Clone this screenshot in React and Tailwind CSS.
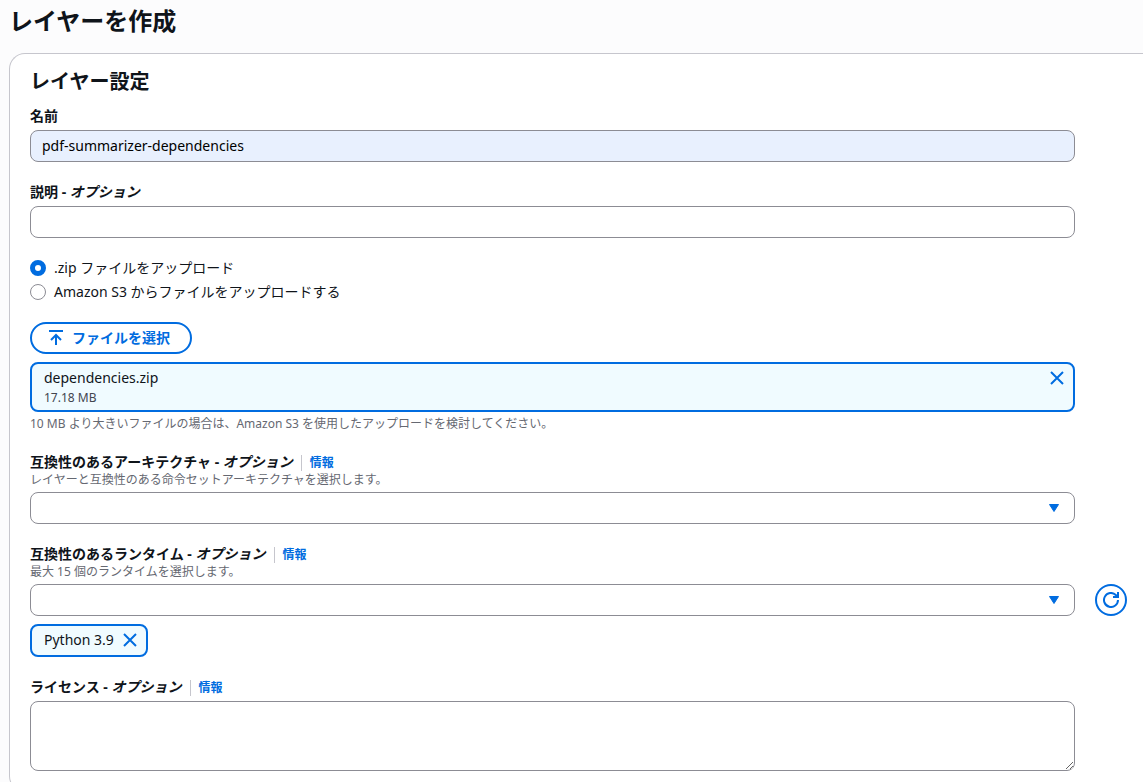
import { useState } from 'react';

const Optional = () => (
  <>
    {' - '}
    <i>オプション</i>
  </>
);

const InfoLink = () => (
  <a href="#info" className="ml-2 mt-0.5 border-l border-[#c6c6cd] pl-2 text-xs leading-4 font-bold text-[#006ce0] hover:underline">
    情報
  </a>
);

const CloseIcon = () => (
  <svg viewBox="0 0 16 16" className="w-4 h-4" fill="none" stroke="currentColor" strokeWidth="2">
    <path d="m2 2 12 12M14 2 2 14" />
  </svg>
);

const Field = ({ id, label, optional, info, hint, children }) => (
  <div>
    <div className="flex items-center h-5">
      <label htmlFor={id} className="font-bold">
        {label}
        {optional && <Optional />}
      </label>
      {info && <InfoLink />}
    </div>
    {hint && <p className="text-xs leading-4 text-[#656871]">{hint}</p>}
    <div className="mt-1">{children}</div>
  </div>
);

const TextInput = ({ className = 'bg-white', ...props }) => (
  <input
    type="text"
    className={`block w-full h-8 px-[11px] pb-0.5 border border-[#8c8c94] rounded-lg outline-none ${className}`}
    {...props}
  />
);

const Select = ({ id, options }) => (
  <div className="relative">
    <select id={id} defaultValue="" className="block w-full h-8 px-[11px] bg-white border border-[#8c8c94] rounded-lg appearance-none outline-none">
      <option value=""></option>
      {options.map((option) => (
        <option key={option} value={option}>{option}</option>
      ))}
    </select>
    <svg viewBox="0 0 16 16" className="absolute right-[13px] top-2 w-4 h-4 text-[#006ce0] pointer-events-none" fill="currentColor" stroke="currentColor" strokeWidth="1" strokeLinejoin="round">
      <path d="M3.5 4.5h9l-4.5 7z" />
    </svg>
  </div>
);

const Radio = ({ id, checked, onChange, children }) => (
  <div className="flex items-center gap-2 h-5">
    <input
      type="radio"
      id={id}
      name="source"
      checked={checked}
      onChange={onChange}
      className="appearance-none w-4 h-4 rounded-full bg-white border border-[#8c8c94] checked:border-5 checked:border-[#006ce0]"
    />
    <label htmlFor={id}>{children}</label>
  </div>
);

export default function App() {
  const [name, setName] = useState('pdf-summarizer-dependencies');
  const [source, setSource] = useState('zip');
  const [file, setFile] = useState({ name: 'dependencies.zip', size: '17.18 MB' });
  const [runtimes, setRuntimes] = useState(['Python 3.9']);

  return (
    <div lang="ja" className="min-h-screen bg-[#fcfcfd] pl-[9px] pt-1.5 font-['Noto_Sans','Noto_Sans_CJK_JP',sans-serif] text-sm leading-5 text-[#0f141a]">
      <h1 className="text-2xl leading-[30px] font-bold">レイヤーを作成</h1>

      <form className="mt-[17px] pl-5 pr-4 pt-4 pb-5 bg-white border border-r-0 border-[#c6c6cd] rounded-l-2xl" onSubmit={(e) => e.preventDefault()}>
        <h2 className="text-xl leading-6 font-bold">レイヤー設定</h2>

        <div className="mt-3 grid grid-cols-[1fr_32px] gap-x-5 gap-y-5">
          <div className="col-start-1">
            <Field id="name" label="名前">
              <TextInput id="name" className="bg-[#e8f0fe] text-black" value={name} onChange={(e) => setName(e.target.value)} />
            </Field>
          </div>

          <div className="col-start-1">
            <Field id="description" label="説明" optional>
              <TextInput id="description" />
            </Field>
          </div>

          <div className="col-start-1 flex flex-col gap-1">
            <Radio id="source-zip" checked={source === 'zip'} onChange={() => setSource('zip')}>
              .zip ファイルをアップロード
            </Radio>
            <Radio id="source-s3" checked={source === 's3'} onChange={() => setSource('s3')}>
              Amazon S3 からファイルをアップロードする
            </Radio>
          </div>

          {/* File upload */}
          <div className="col-start-1">
            <button type="button" className="flex items-center gap-2 h-8 pl-4 pr-5 border-2 border-[#006ce0] rounded-full bg-white font-bold text-[#006ce0]">
              <svg viewBox="0 0 16 16" className="w-4 h-4" fill="none" stroke="currentColor" strokeWidth="2">
                <path d="M1 1h14M8 15V5M3 10l5-5 5 5" />
              </svg>
              ファイルを選択
            </button>
            {file && (
              <div className="mt-2 flex items-start justify-between h-[50px] pl-3 pr-2 pt-1 border-2 border-[#006ce0] rounded-lg bg-[#f0fbff]">
                <div>
                  <div>{file.name}</div>
                  <div className="text-xs leading-5 text-[#424650]">{file.size}</div>
                </div>
                <button type="button" aria-label="ファイルを削除" className="mt-0.5 text-[#006ce0]" onClick={() => setFile(null)}>
                  <CloseIcon />
                </button>
              </div>
            )}
            <p className="mt-1 text-xs leading-4 text-[#656871]">
              10 MB より大きいファイルの場合は、Amazon S3 を使用したアップロードを検討してください。
            </p>
          </div>

          <div className="col-start-1">
            <Field id="arch" label="互換性のあるアーキテクチャ" optional info hint="レイヤーと互換性のある命令セットアーキテクチャを選択します。">
              <Select id="arch" options={['x86_64', 'arm64']} />
            </Field>
          </div>

          {/* Runtimes */}
          <div className="col-start-1">
            <Field id="runtime" label="互換性のあるランタイム" optional info hint="最大 15 個のランタイムを選択します。">
              <Select id="runtime" options={['Python 3.9', 'Python 3.12', 'Node.js 22.x']} />
            </Field>
            <div className="mt-2 flex gap-2">
              {runtimes.map((runtime) => (
                <span key={runtime} className="flex items-start gap-2 h-[33px] pl-3 pr-2 pt-1 border-2 border-[#006ce0] rounded-lg bg-[#f0fbff]">
                  {runtime}
                  <button type="button" aria-label={`${runtime} を削除`} className="mt-0.5 text-[#006ce0]" onClick={() => setRuntimes(runtimes.filter((r) => r !== runtime))}>
                    <CloseIcon />
                  </button>
                </span>
              ))}
            </div>
          </div>
          <button type="button" aria-label="更新" className="col-start-2 mt-10 flex items-center justify-center w-8 h-8 border-2 border-[#006ce0] rounded-full bg-white text-[#006ce0]">
            <svg viewBox="0 0 16 16" className="w-4 h-4" fill="none" stroke="currentColor" strokeWidth="2">
              <path d="M15 8a7 7 0 1 1-2.2-5.1L15 5" />
              <path d="M10 5h5V0" />
            </svg>
          </button>

          <div className="col-start-1">
            <Field id="license" label="ライセンス" optional info>
              <textarea id="license" className="block w-full h-[70px] px-[11px] py-1 bg-white border border-[#8c8c94] rounded-lg outline-none" />
            </Field>
          </div>
        </div>
      </form>
    </div>
  );
}
